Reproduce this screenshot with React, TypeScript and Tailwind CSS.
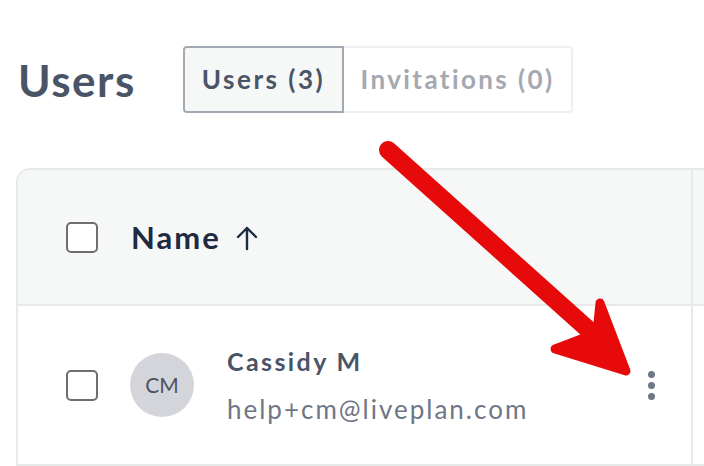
const Checkbox = () => (
  <span className="block h-[31px] w-[32px] rounded-[5px] border-2 border-[#6e6e6e] bg-white" />
);

export default function App() {
  return (
    <div className="relative h-[466px] w-[704px] overflow-hidden bg-white font-['Lato',sans-serif]">
      <div className="flex items-center pl-[18px] pt-[46px]">
        <h1 className="w-[165px] text-[44px] font-bold leading-none tracking-[1.5px] text-[#4a5467]">
          Users
        </h1>
        <div className="flex h-[67px]">
          <button className="h-full w-[161px] rounded-l-[4px] border-2 border-[#a3a9b3] bg-[#f6f8f8] text-[26px] font-bold tracking-[2.5px] text-[#4a5467]">
            Users (3)
          </button>
          <button className="h-full w-[229px] rounded-r-[4px] border-2 border-l-0 border-[#eef0f0] bg-white text-[26px] font-bold tracking-[2.4px] text-[#a4a9b1]">
            Invitations (0)
          </button>
        </div>
      </div>

      <div className="ml-[16px] mt-[55px] w-[720px] overflow-hidden rounded-tl-[14px] border-2 border-[#e8eaea]">
        <div className="flex h-[134px] bg-[#f6f8f8]">
          <div className="flex w-[675px] items-center border-r-2 border-[#e8eaea] pl-[48px]">
            <Checkbox />
            <span className="ml-[33px] text-[31px] font-bold tracking-[2px] text-[#1d2a40]">Name</span>
            <svg width="24" height="26" viewBox="0 0 24 26" className="ml-[14px] mt-[2px]">
              <path d="M12 24V3M3 12l9-9 9 9" fill="none" stroke="#1d2a40" strokeWidth="2.4" strokeLinecap="round" strokeLinejoin="round" />
            </svg>
          </div>
        </div>
        <div className="flex h-[160px] border-t-2 border-[#e8eaea] bg-white">
          <div className="flex w-[675px] items-center border-r-2 border-[#e8eaea] pl-[48px]">
            <Checkbox />
            <div className="ml-[32px] flex h-[64px] w-[64px] items-center justify-center rounded-full bg-[#d4d5da] text-[21px] text-[#4a5467]">
              CM
            </div>
            <div className="ml-[33px] flex flex-col">
              <span className="text-[25px] font-bold leading-[30px] tracking-[2.4px] text-[#4a5467]">Cassidy M</span>
              <span className="mt-[18px] text-[26px] leading-[30px] tracking-[2px] text-[#6f7685]">help+cm@liveplan.com</span>
            </div>
            <div className="ml-auto mr-[36px] flex flex-col gap-[4px]">
              <span className="h-[7px] w-[7px] rounded-full bg-[#6f7685]" />
              <span className="h-[7px] w-[7px] rounded-full bg-[#6f7685]" />
              <span className="h-[7px] w-[7px] rounded-full bg-[#6f7685]" />
            </div>
          </div>
        </div>
      </div>

      <svg className="pointer-events-none absolute inset-0" width="704" height="466" viewBox="0 0 704 466">
        <path d="M388 150L600 340" fill="none" stroke="#e60a0a" strokeWidth="18" strokeLinecap="round" />
        <path d="M555 349L597 333L600 303L626 371Z" fill="#e60a0a" stroke="#e60a0a" strokeWidth="9" strokeLinejoin="round" />
      </svg>
    </div>
  );
}
